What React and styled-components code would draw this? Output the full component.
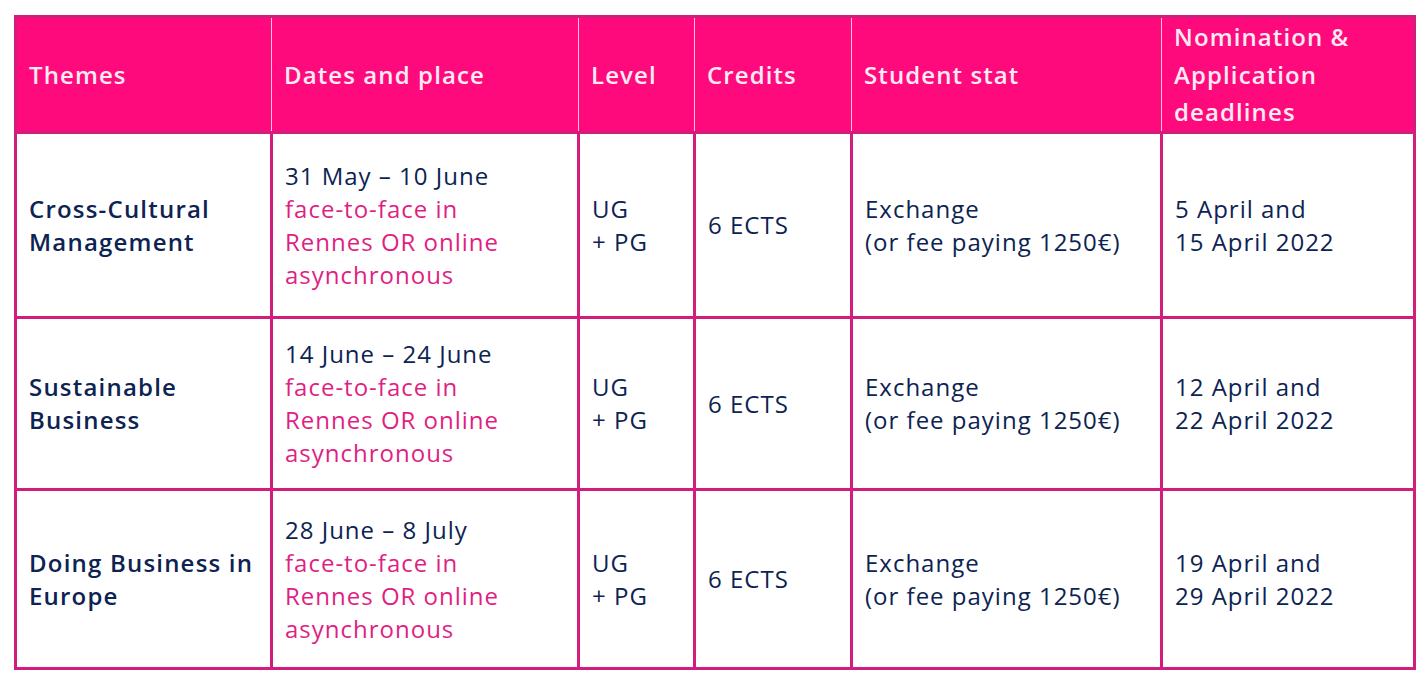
import React from "react";
import styled, { createGlobalStyle } from "styled-components";

const GlobalStyle = createGlobalStyle`
  html, body {
    margin: 0;
    padding: 0;
    background: #ffffff;
  }
  body {
    font-family: "Open Sans", "Noto Sans", sans-serif;
  }
`;

const rows = [
  {
    theme: ["Cross-Cultural", "Management"],
    dates: "31 May – 10 June",
    height: 185,
    deadlines: ["5 April and", "15 April 2022"],
  },
  {
    theme: ["Sustainable", "Business"],
    dates: "14 June – 24 June",
    height: 172,
    deadlines: ["12 April and", "22 April 2022"],
  },
  {
    theme: ["Doing Business in", "Europe"],
    dates: "28 June – 8 July",
    height: 179,
    deadlines: ["19 April and", "29 April 2022"],
  },
];

const App = () => {
  return (
    <Page>
      <GlobalStyle />
      <Table>
        <colgroup>
          <col style={{ width: 256 }} />
          <col style={{ width: 307 }} />
          <col style={{ width: 116 }} />
          <col style={{ width: 157 }} />
          <col style={{ width: 310 }} />
          <col style={{ width: 253 }} />
        </colgroup>
        <thead>
          <HeadRow>
            <Th>Themes</Th>
            <Th>Dates and place</Th>
            <Th>Level</Th>
            <Th>Credits</Th>
            <Th>Student stat</Th>
            <Th>
              Nomination &amp;
              <br />
              Application
              <br />
              deadlines
            </Th>
          </HeadRow>
        </thead>
        <tbody>
          {rows.map((row) => (
            <BodyRow key={row.dates} $height={row.height}>
              <Td $bold>
                {row.theme[0]}
                <br />
                {row.theme[1]}
              </Td>
              <Td>
                {row.dates}
                <Place>
                  face-to-face in
                  <br />
                  Rennes OR online
                  <br />
                  asynchronous
                </Place>
              </Td>
              <Td>
                UG
                <br />+ PG
              </Td>
              <Td>6 ECTS</Td>
              <Td>
                Exchange
                <br />
                (or fee paying 1250€)
              </Td>
              <Td>
                {row.deadlines[0]}
                <br />
                {row.deadlines[1]}
              </Td>
            </BodyRow>
          ))}
        </tbody>
      </Table>
    </Page>
  );
};

// Styled Components
const Page = styled.div`
  padding: 15px 0 0 14px;
  width: 1428px;
  height: 683px;
  box-sizing: border-box;
`;

const Table = styled.table`
  width: 1399px;
  border-collapse: collapse;
  table-layout: fixed;
  border: 3px solid #d21c7e;
`;

const HeadRow = styled.tr`
  height: 114px;
  background: #ff0a7c;
`;

const Th = styled.th`
  text-align: left;
  vertical-align: middle;
  padding: 0 12px;
  font-size: 24px;
  line-height: 37.5px;
  font-weight: 600;
  letter-spacing: 1.1px;
  color: #fdeaf3;
  border-left: 1px solid #ffc2dd;

  &:first-child {
    border-left: none;
  }
`;

const BodyRow = styled.tr`
  height: ${({ $height }) => $height}px;
`;

const Td = styled.td`
  text-align: left;
  vertical-align: middle;
  padding: 0 12px;
  font-size: 24px;
  line-height: 33px;
  font-weight: ${({ $bold }) => ($bold ? 600 : 400)};
  letter-spacing: ${({ $bold }) => ($bold ? 1.2 : 1)}px;
  color: #0d2352;
  border: 3px solid #d21c7e;
`;

const Place = styled.div`
  color: #df1f84;
`;

export default App;
